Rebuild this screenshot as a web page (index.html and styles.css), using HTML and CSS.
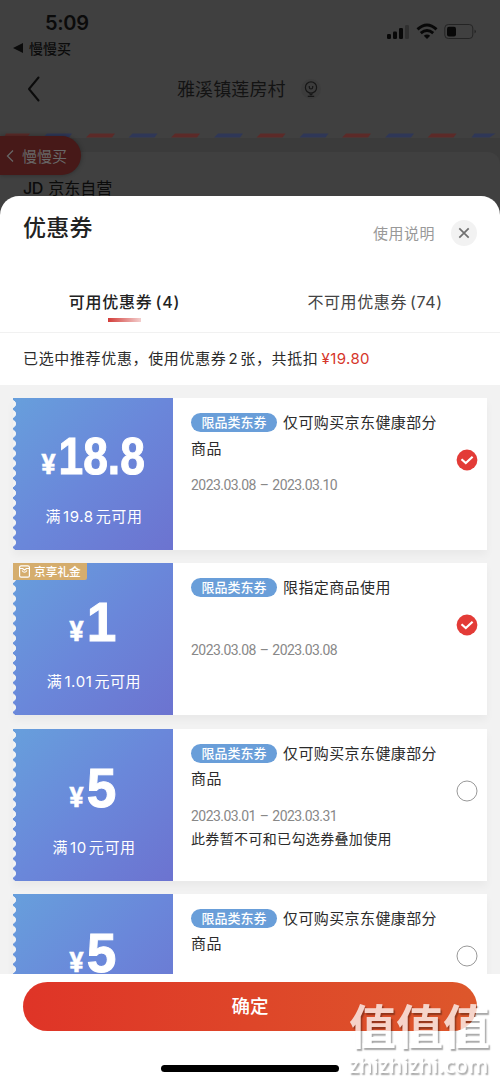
FILE: index.html
```html
<!DOCTYPE html>
<html lang="zh-CN">
<head>
<meta charset="utf-8">
<title>优惠券</title>
<link rel="stylesheet" href="styles.css">
</head>
<body>
<div class="screen">
  <div class="backdrop">
    <div class="status">
      <span class="clock">5:09</span>
      <svg class="status-icons" width="92" height="18" viewBox="0 0 92 18">
        <g fill="#080808"><rect x="0" y="11" width="4" height="5" rx="1.3"/><rect x="6" y="8.5" width="4" height="7.500" rx="1.300"/><rect x="12" y="5" width="4" height="11" rx="1.300"/></g>
        <rect x="18" y="2" width="4" height="14" rx="1.300" fill="#303030"/>
        <g fill="none" stroke="#080808" stroke-width="2.900"><path d="M30.500 6.300Q40 -2.200 49.500 6.300"/><path d="M33.800 10.100Q40 4.700 46.200 10.100"/></g>
        <path d="M36.800 12.700Q40 10.300 43.200 12.700L40 16Z" fill="#080808"/>
        <rect x="57.800" y="1.500" width="28" height="14" rx="3.500" fill="none" stroke="#242424"/>
        <rect x="60" y="3.700" width="9" height="9.800" rx="2" fill="#080808"/>
        <path d="M87.500 6.500q3 2 0 4z" fill="#242424"/>
      </svg>
    </div>
    <div class="return-app"><span class="triangle"></span>慢慢买</div>
    <div class="nav">
      <svg class="back" width="14" height="26" viewBox="0 0 14 26"><path d="M11.500 1.500L2 13l9.500 11.500" fill="none" stroke="#0b0b0b" stroke-width="2" stroke-linecap="round" stroke-linejoin="round"/></svg>
      <span class="address">雅溪镇莲房村</span>
      <span class="pin"><svg width="14" height="17" viewBox="0 0 14 17"><g fill="none" stroke="#171717" stroke-width="1.200"><circle cx="7" cy="6.500" r="5.600"/><path d="M5.300 5v1.300a1.700 1.700 0 0 0 3.400 0V5M3.800 15.400h6.400"/><path d="M5.500 12.500L7 14l1.500-1.500"/></g></svg></span>
    </div>
    <svg class="stripe" width="500" height="6" viewBox="0 0 500 6">
      <g fill="#5c2a28"><path d="M6 1.500h24l-3 4H4z M90 1.500h25l-3 4H86z M175 1.500h25l-3 4h-26z M260.500 1.500h25l-3 4h-26z M346 1.500h25l-3 4h-26z M431.500 1.500h25l-3 4h-26z"/></g>
      <g fill="#2f3757"><path d="M47 1.500h25l-3 4H43z M132.500 1.500h25l-3 4h-26z M218 1.500h25l-3 4h-26z M303.500 1.500h25l-3 4h-26z M389 1.500h25l-3 4h-26z M474.500 1.500h21l-6 4h-18z"/></g>
    </svg>
    <div class="shop-area"><div class="shop"><b>JD</b> 京东自营</div></div>
    <div class="float-return"><svg width="8" height="14" viewBox="0 0 8 14"><path d="M7 1.500L1.500 7 7 12.500" fill="none" stroke="#666" stroke-width="1.300"/></svg><span>慢慢买</span></div>
  </div>

  <section class="sheet">
    <header class="sheet-head">
      <h1>优惠券</h1>
      <span class="help">使用说明</span>
      <span class="close"><svg width="12" height="12" viewBox="0 0 12 12"><path d="M1.300 1.300l9.400 9.400M10.700 1.300l-9.400 9.400" stroke="#707070" stroke-width="1.700"/></svg></span>
    </header>
    <nav class="tabs">
      <div class="tab active"><span>可用优惠券<i>(4)</i></span></div>
      <div class="tab"><span>不可用优惠券<i>(74)</i></span></div>
    </nav>
    <p class="summary">已选中推荐优惠，使用优惠券<i>2</i>张，共抵扣<em>¥19.80</em></p>
    <main class="list">
      <article class="card">
        <div class="value"><div class="price small"><i>¥</i><b>18.8</b></div><div class="rule">满<i>19.8</i>元可用</div></div>
        <div class="info"><p class="name"><span class="tag">限品类东券</span>仅可购买京东健康部分<br>商品</p><p class="date">2023.03.08 – 2023.03.10</p></div>
        <svg class="check" width="22" height="22" viewBox="0 0 22 22"><circle cx="11" cy="11" r="10.400" fill="#e33b37"/><path d="M5.500 10.200l4.300 3.800 6.800-6.200" fill="none" stroke="#fff" stroke-width="2.200"/></svg>
      </article>
      <article class="card">
        <div class="value"><span class="gift"><svg width="11" height="13" viewBox="0 0 11 13"><g fill="none" stroke="#fff" stroke-width="1.200"><rect x=".6" y=".8" width="9.800" height="11.400" rx="1.500"/><path d="M1 3.500h2.500M7.500 3.500H10M3 5.500q2.500 3.500 5 0M3.500 3.500l2 1.500 2-1.500"/></g></svg>京享礼金</span><div class="price"><i>¥</i><b>1</b></div><div class="rule">满<i>1.01</i>元可用</div></div>
        <div class="info"><p class="name"><span class="tag">限品类东券</span>限指定商品使用</p><p class="date">2023.03.08 – 2023.03.08</p></div>
        <svg class="check" width="22" height="22" viewBox="0 0 22 22"><circle cx="11" cy="11" r="10.400" fill="#e33b37"/><path d="M5.500 10.200l4.300 3.800 6.800-6.200" fill="none" stroke="#fff" stroke-width="2.200"/></svg>
      </article>
      <article class="card">
        <div class="value"><div class="price"><i>¥</i><b>5</b></div><div class="rule">满<i>10</i>元可用</div></div>
        <div class="info"><p class="name"><span class="tag">限品类东券</span>仅可购买京东健康部分<br>商品</p><p class="date">2023.03.01 – 2023.03.31</p><p class="note">此券暂不可和已勾选券叠加使用</p></div>
        <svg class="check" width="22" height="22" viewBox="0 0 22 22"><circle cx="11" cy="11" r="10" fill="#fff" stroke="#999"/></svg>
      </article>
      <article class="card">
        <div class="value"><div class="price"><i>¥</i><b>5</b></div></div>
        <div class="info"><p class="name"><span class="tag">限品类东券</span>仅可购买京东健康部分<br>商品</p></div>
        <svg class="check" width="22" height="22" viewBox="0 0 22 22"><circle cx="11" cy="11" r="10" fill="#fff" stroke="#999"/></svg>
      </article>
    </main>
    <footer class="actions">
      <div class="confirm">确定</div>
      <div class="home-bar"></div>
    </footer>
  </section>
  <div class="watermark"><span class="wm-cn">值值值</span><span class="wm-en">zhizhizhi.com</span></div>
</div>
</body>
</html>
```
FILE: styles.css
```css
* { box-sizing: border-box; }
body { margin: 0; font-family: Inter, "Noto Sans CJK SC", sans-serif; color: #2b2b2b; }
p, h1 { margin: 0; }
i, em { font-style: normal; }
svg { display: block; flex: none; }
.screen { position: relative; width: 500px; height: 1082px; overflow: hidden; background: #404040; white-space: nowrap; display: flex; flex-direction: column; }

.backdrop { height: 196px; flex: none; color: #0b0b0b; display: flex; flex-direction: column; position: relative; }
.status { height: 38px; display: flex; justify-content: space-between; padding: 11px 21px 0 45px; flex: none; }
.clock { font-size: 20px; line-height: 24px; font-weight: 600; letter-spacing: -.3px; }
.status-icons { margin-top: 12px; }
.return-app { height: 20px; flex: none; display: flex; align-items: center; font-size: 14px; font-weight: 500; padding-left: 13px; gap: 6px; }
.triangle { border: 5px solid transparent; border-left: 0; border-right: 10px solid #0b0b0b; }
.nav { height: 61px; flex: none; display: flex; align-items: center; padding-left: 27px; }
.address { font-size: 18px; letter-spacing: .1px; margin: -1px 0 0 136px; color: #131313; }
.pin { width: 20px; height: 20px; margin: 1px 0 0 15px; background: #3c3c3c; border-radius: 50%; display: grid; place-items: center; }
.stripe { flex: none; margin-top: 13px; }
.shop-area { background: #3b3b3b; padding-top: 14px; flex: 1; min-height: 0; }
.shop { background: #404040; border-radius: 12px 12px 0 0; height: 44px; padding: 13px 0 0 23px; font-size: 16px; line-height: 46px; overflow: hidden; }
.shop b { font-weight: 500; letter-spacing: -.5px; margin-right: 1px; }
.float-return { position: absolute; left: 0; top: 136px; width: 81px; height: 39px; border-radius: 0 20px 20px 0; background: #471918; color: #686868; display: flex; align-items: center; gap: 8px; padding-left: 6px; font-size: 15px; box-shadow: 0 0 5px #0005; }

.sheet { background: #fff; border-radius: 19px 19px 0 0; flex: 1; min-height: 0; display: flex; flex-direction: column; position: relative; }
.sheet-head { height: 76px; flex: none; display: flex; align-items: center; padding: 0 23px; }
h1 { font-size: 23px; line-height: 34px; font-weight: 500; letter-spacing: .3px; margin-top: -12px; flex: 1; color: #222; }
.help { font-size: 15px; letter-spacing: .5px; color: #999; margin: -4px 16px 0 0; }
.close { width: 26px; height: 26px; margin-top: -2px; background: #f2f2f2; border-radius: 50%; display: grid; place-items: center; }
.tabs { height: 61px; flex: none; display: grid; grid-template-columns: 1fr 1fr; border-bottom: 1px solid #f1f1f1; }
.tab { font-size: 16px; line-height: 24px; padding-top: 18px; text-align: center; letter-spacing: .6px; color: #444; }
.tab i { margin-left: 3px; }
.active { font-weight: 500; color: #222; letter-spacing: .75px; padding-right: 1px; }
.active::after { content: ""; display: block; width: 33px; height: 4px; margin: 4px auto 0; background: linear-gradient(90deg, #d33c38, #f3cfce); }
.summary { height: 52px; flex: none; padding-left: 23px; line-height: 52px; font-size: 15px; letter-spacing: .65px; }
.summary i { margin: 0 2px; }
.summary em { color: #d6362b; margin-left: 3px; letter-spacing: .4px; }
.list { flex: 1; min-height: 0; overflow: hidden; background: #f2f2f2; padding: 13px 13px 0; display: flex; flex-direction: column; gap: 13.300px; }
.card { height: 152px; flex: none; display: flex; background: linear-gradient(90deg, transparent 20px, #fff 20px); box-shadow: 0 5px 8px #0000000a; }
.value { width: 160px; color: #fff; position: relative; z-index: 0; display: flex; flex-direction: column; align-items: center; }
.value::before { content: ""; position: absolute; inset: 0; z-index: -1; background: linear-gradient(135deg, #679fdc, #6a87da 50%, #6c73d0); -webkit-mask: radial-gradient(circle at -1px 5px, transparent 3.700px, #000 4.300px) 0 1px / 160px 9.900px; mask: radial-gradient(circle at -1px 5px, transparent 3.700px, #000 4.300px) 0 1px / 160px 9.900px; }
.price { height: 96px; padding-top: 28px; display: flex; align-items: baseline; font: 56px/62px "Liberation Sans", sans-serif; gap: 2px; }
.price b { font-weight: 700; transform: scaleX(.95); -webkit-text-stroke: 1px #fff; }
.price i { font: 700 27px Roboto, sans-serif; -webkit-text-stroke: .4px #fff; }
.small { font-size: 51px; }
.small b { transform: scaleX(.87); margin: 0 -6px; }
.rule { margin: 12px 0 0 2px; font-size: 15px; line-height: 22px; letter-spacing: .6px; }
.rule i { margin: 0 2px; }
.gift { position: absolute; left: 0; top: 0; height: 17px; width: 74px; background: #d5ad6d; display: flex; align-items: center; gap: 4px; padding-left: 6px; font-size: 11.700px; line-height: 16px; font-weight: 500; border-radius: 0 0 2px 0; }
.info { flex: 1; padding: 12px 0 0 18px; }
.name { font-size: 15px; line-height: 25.500px; letter-spacing: .4px; height: 63px; }
.tag { display: inline-block; vertical-align: 1px; width: 86px; height: 19px; margin-right: 6px; border-radius: 10px; background: #699ed9; color: #fff; font-size: 13px; line-height: 19px; text-align: center; font-weight: 500; letter-spacing: 0; }
.date { font: 400 14px/24px Roboto, sans-serif; letter-spacing: -.55px; word-spacing: 1px; color: #888; }
.note { font-size: 14px; line-height: 22px; letter-spacing: .35px; }
.check { align-self: flex-start; margin: 51px 9px 0 0; }
.actions { height: 108px; flex: none; background: #fff; padding: 8px 23px 0; }
.confirm { height: 49px; border-radius: 25px; background: linear-gradient(90deg, #df3427, #dd572b); color: #fff; font-size: 18.500px; font-weight: 500; line-height: 48px; text-align: center; }
.home-bar { width: 178px; height: 7px; border-radius: 4px; background: #000; margin: 34px auto 0; }
.watermark { position: absolute; z-index: 2; left: 349px; top: 997px; width: 145px; display: flex; flex-direction: column; color: #fff; opacity: .75; text-shadow: 1.500px 1.500px 1.500px #0007; }
.wm-cn { font: 700 47px/54px "Noto Sans CJK SC", sans-serif; }
.wm-en { font: 600 21px/28px "Open Sans", sans-serif; letter-spacing: .2px; }
```
